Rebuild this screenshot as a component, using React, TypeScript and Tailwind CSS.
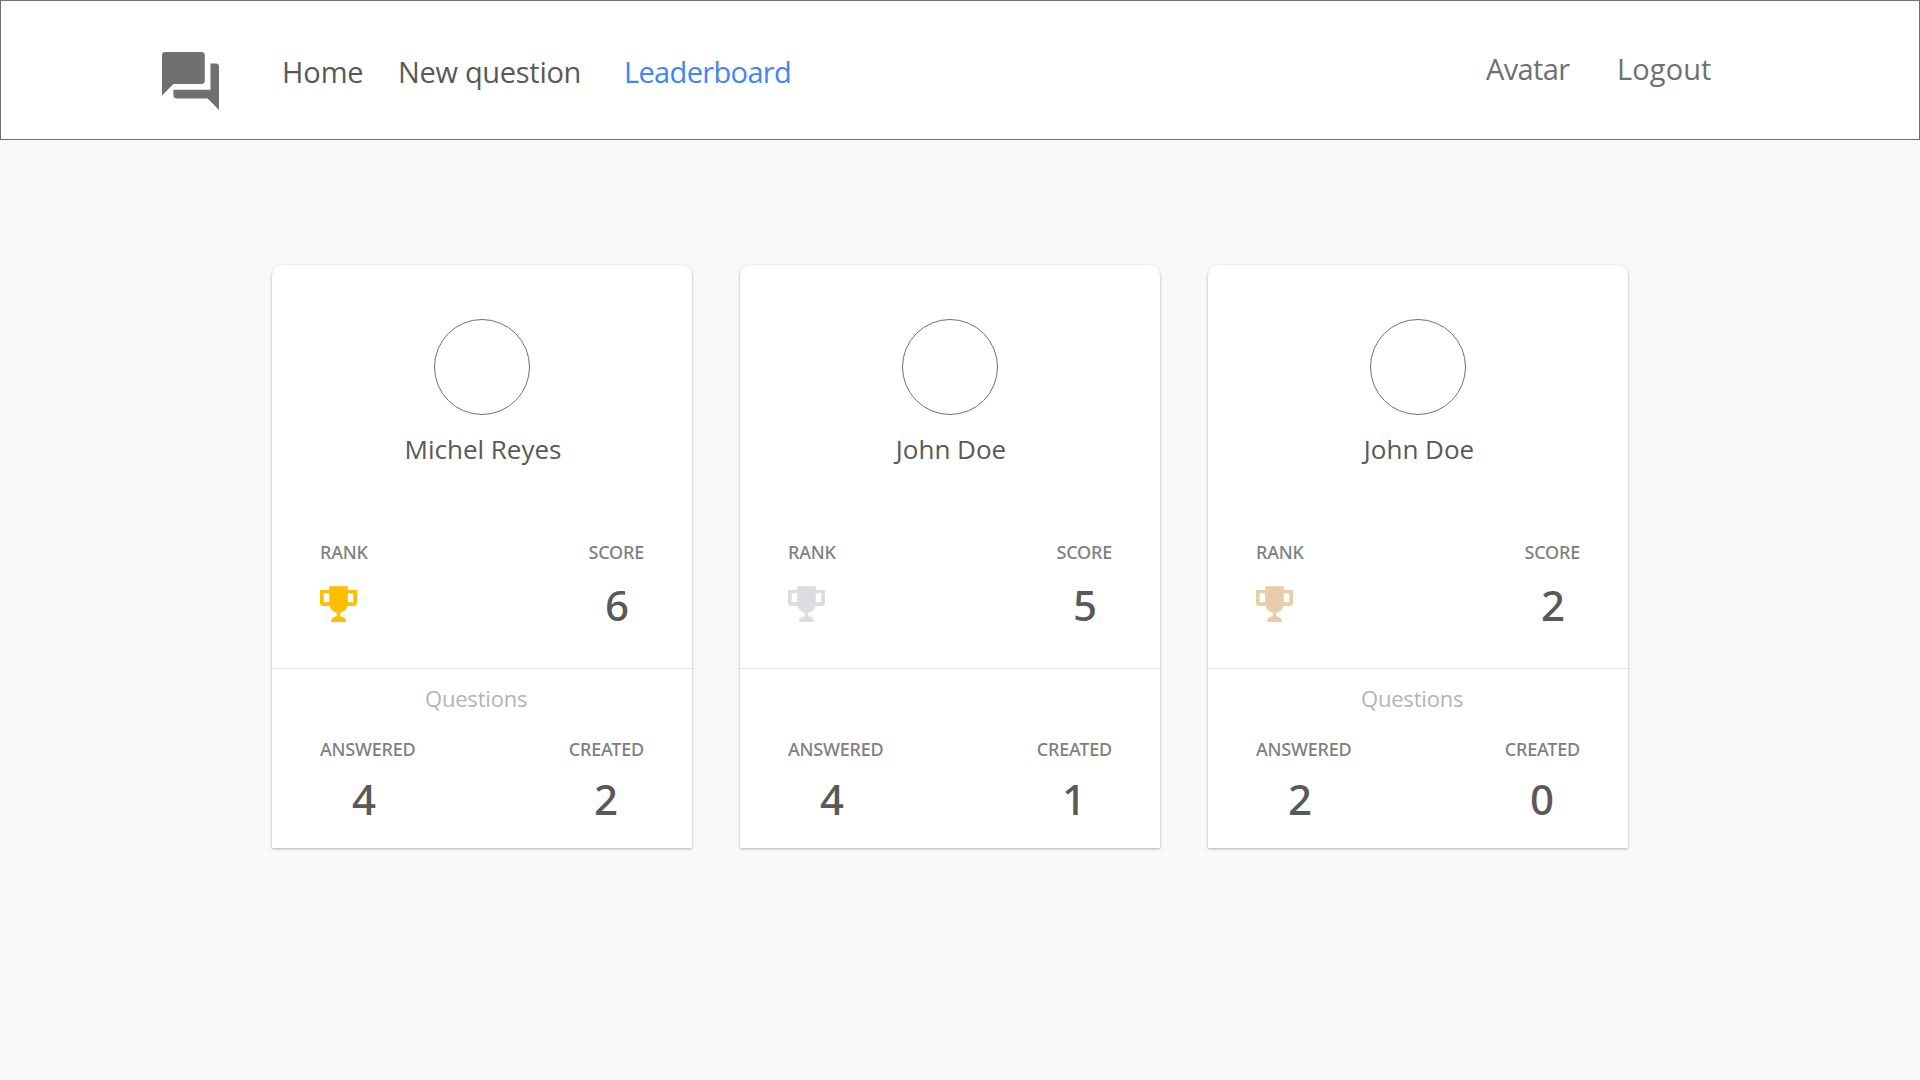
import React from "react";

type Player = {
  name: string;
  trophy: string;
  score: number;
  answered: number;
  created: number;
  heading: boolean;
};

const players: Player[] = [
  { name: "Michel Reyes", trophy: "text-[#ffbf00]", score: 6, answered: 4, created: 2, heading: true },
  { name: "John Doe", trophy: "text-[#dcdde1]", score: 5, answered: 4, created: 1, heading: false },
  { name: "John Doe", trophy: "text-[#e8cdab]", score: 2, answered: 2, created: 0, heading: true },
];

function ForumIcon() {
  return (
    <svg viewBox="2 2 20 20" preserveAspectRatio="none" fill="#707070" className="mt-[51px] h-[58px] w-[57px]">
      <path d="M21 6h-2v9H6v2c0 .55.45 1 1 1h11l4 4V7c0-.55-.45-1-1-1zm-4 6V3c0-.55-.45-1-1-1H3c-.55 0-1 .45-1 1v14l4-4h10c.55 0 1-.45 1-1z" />
    </svg>
  );
}

function Trophy({ className }: { className: string }) {
  return (
    <svg viewBox="0 0 37 36" className={`mt-[5px] h-[36px] w-[37px] ${className}`}>
      <path
        fill="currentColor"
        fillRule="evenodd"
        d="M9.2 0.3H27.8V4H37V16.5Q37 20 33.5 20H27.3C26.6 23.6 23.8 26 20.2 26.7V30.3C23.8 30.8 26 32.6 26 36H11C11 32.6 13.2 30.8 16.8 30.3V26.7C13.2 26 10.4 23.6 9.7 20H3.5Q0 20 0 16.5V4H9.2ZM3.7 7.3V16.2H9.2V7.3ZM27.8 7.3V16.2H33.3V7.3Z"
      />
    </svg>
  );
}

function Label({ children }: { children: React.ReactNode }) {
  return (
    <span className="font-['Noto_Sans',sans-serif] text-[18px] leading-6 font-medium tracking-[-0.2px] text-[#808080]">
      {children}
    </span>
  );
}

function Value({ children, className }: { children: React.ReactNode; className: string }) {
  return (
    <span className={`font-['Noto_Sans',sans-serif] text-[42px] leading-[48px] font-medium text-[#595959] ${className}`}>
      {children}
    </span>
  );
}

function PlayerCard({ player }: { player: Player }) {
  return (
    <article className="h-[583px] w-[420px] rounded-t-[10px] bg-white pt-[54px] shadow-[0_1px_3px_rgba(0,0,0,0.3)]">
      <div className="mx-auto size-24 rounded-full border border-[#707070]" />
      <h2 className="mt-4 pl-[2px] text-center text-[26px] leading-9 text-[#595959]">{player.name}</h2>
      <div className="mt-[73px] flex justify-between px-12">
        <Label>RANK</Label>
        <Label>SCORE</Label>
      </div>
      <div className="mt-[17px] flex justify-between px-12">
        <Trophy className={player.trophy} />
        <Value className="mr-[15px]">{player.score}</Value>
      </div>
      <hr className="mt-[39px] border-[#e8e8e8]" />
      <div className="mt-[13px] h-8 pl-[153px] text-[22px] leading-8 tracking-[-0.2px] text-[#b4b4b4]">
        {player.heading && "Questions"}
      </div>
      <div className="mt-[23px] flex justify-between px-12">
        <Label>ANSWERED</Label>
        <Label>CREATED</Label>
      </div>
      <div className="mt-[14px] flex justify-between px-12">
        <Value className="ml-8">{player.answered}</Value>
        <Value className="mr-[26px]">{player.created}</Value>
      </div>
    </article>
  );
}

export default function App() {
  return (
    <div className="min-h-screen bg-[#f8f9fb] font-['Open_Sans',sans-serif]">
      <header className="flex h-[140px] items-start border border-[#707070] bg-white pr-[208px] pl-[161px] text-[29px] leading-10">
        <ForumIcon />
        <nav className="mt-[51px] ml-[63px] flex text-[#595959]">
          <a className="w-[116px] tracking-[-0.1px]">Home</a>
          <a className="w-[226px] tracking-[-0.3px]">New question</a>
          <a className="tracking-[-0.65px] text-[#4285f4]">Leaderboard</a>
        </nav>
        <div className="mt-12 ml-auto flex text-[#707070]">
          <a className="w-[131px] tracking-[-0.65px]">Avatar</a>
          <a className="w-[94px] tracking-[0.1px]">Logout</a>
        </div>
      </header>
      <main className="flex gap-12 pt-[125px] pl-[272px]">
        {players.map((player, i) => (
          <PlayerCard key={i} player={player} />
        ))}
      </main>
    </div>
  );
}
